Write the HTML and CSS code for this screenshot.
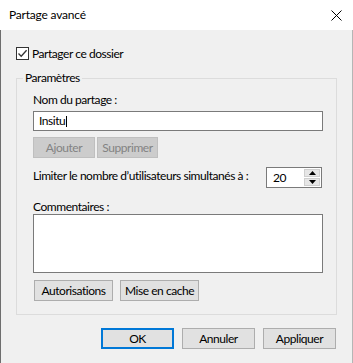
FILE: index.html
```html
<!DOCTYPE html>
<html lang="fr">
<head>
<meta charset="utf-8">
<title>Partage avancé</title>
<link rel="stylesheet" href="styles.css">
</head>
<body>
<div class="window">
  <div class="titlebar">
    <span class="title">Partage avancé</span>
    <svg class="close" width="11" height="11" viewBox="0 0 11 11"><path d="M0.5 0.5 L10.5 10.5 M10.5 0.5 L0.5 10.5" stroke="#000" stroke-width="1" fill="none"/></svg>
  </div>
  <div class="content">
    <div class="check">
      <span class="box"><svg width="11" height="11" viewBox="0 0 11 11"><path d="M1.5 5.5 L4.2 8.3 L9.6 2.2" stroke="#333" stroke-width="1.3" fill="none"/></svg></span>
      <span class="checklabel">Partager ce dossier</span>
    </div>
    <fieldset class="group">
      <legend class="legend">Paramètres</legend>
      <div class="groupbody">
        <div class="label">Nom du partage :</div>
        <div class="textbox">Insitu<span class="caret"></span></div>
        <div class="btnrow first">
          <div class="btn disabled w-ajouter">Ajouter</div>
          <div class="btn disabled w-supprimer">Supprimer</div>
        </div>
        <div class="limit">
          <span class="limittext">Limiter le nombre d’utilisateurs simultanés à :</span>
          <div class="spin">
            <span class="spinval">20</span>
            <div class="arrows">
              <div class="arrow"><svg width="7" height="4" viewBox="0 0 7 4"><path d="M3.5 0 L7 4 L0 4 Z" fill="#000"/></svg></div>
              <div class="arrow"><svg width="7" height="4" viewBox="0 0 7 4"><path d="M0 0 L7 0 L3.5 4 Z" fill="#000"/></svg></div>
            </div>
          </div>
        </div>
        <div class="label comments">Commentaires :</div>
        <div class="textarea"></div>
        <div class="btnrow second">
          <div class="btn w-autor">Autorisations</div>
          <div class="btn w-cache">Mise en cache</div>
        </div>
      </div>
    </fieldset>
    <div class="footer">
      <div class="btn default w-foot">OK</div>
      <div class="btn w-foot">Annuler</div>
      <div class="btn w-foot">Appliquer</div>
    </div>
  </div>
</div>
</body>
</html>
```
FILE: styles.css
```css
html, body {
  margin: 0;
  padding: 0;
}
body {
  width: 353px;
  height: 363px;
  overflow: hidden;
  background: #f0f0f0;
  font-family: "Segoe UI", Lato, "Noto Sans", sans-serif;
  font-size: 12px;
  letter-spacing: -0.45px;
  color: #000;
  white-space: nowrap;
}
.window {
  width: 353px;
  height: 363px;
  box-sizing: border-box;
  display: flex;
  flex-direction: column;
}
.titlebar {
  height: 30px;
  background: #fff;
  display: flex;
  align-items: center;
  justify-content: space-between;
  padding: 0 11px 0 9px;
  flex-shrink: 0;
}
.title {
  line-height: 14px;
  letter-spacing: -0.2px;
}
.close {
  display: block;
  margin-top: 1px;
}
.content {
  flex: 1;
  border-left: 1px solid #6e6e6e;
  border-right: 1px solid #b5b5b5;
  padding: 17px 16px 0 15px;
}
.check {
  display: flex;
  align-items: center;
  height: 13px;
}
.box {
  width: 11px;
  height: 11px;
  border: 1px solid #333;
  background: #fff;
  display: block;
}
.box svg {
  display: block;
}
.checklabel {
  margin-left: 3px;
  line-height: 14px;
}
.group {
  margin: 11px 0 0 0;
  padding: 0;
  border: 1px solid #dcdcdc;
  width: 321px;
  min-width: 0;
  box-sizing: border-box;
  height: 244px;
}
.legend {
  margin-left: 6px;
  padding: 0 2px;
  line-height: 14px;
}
.groupbody {
  padding: 8px 13px 0 16px;
}
.label {
  line-height: 14px;
}
.textbox {
  margin-top: 4px;
  height: 20px;
  box-sizing: border-box;
  border: 1px solid #7a7a7a;
  background: #fff;
  padding-left: 5px;
  display: flex;
  align-items: center;
  line-height: 14px;
}
.caret {
  display: inline-block;
  width: 1px;
  height: 11px;
  background: #000;
  margin-left: 1px;
}
.btnrow {
  display: flex;
  gap: 2px;
}
.btnrow.first {
  margin-top: 6px;
}
.btnrow.second {
  margin-top: 7px;
  gap: 7px;
  padding-left: 1px;
}
.btn {
  height: 21px;
  box-sizing: border-box;
  border: 1px solid #adadad;
  background: #e1e1e1;
  display: flex;
  align-items: center;
  justify-content: center;
  line-height: 14px;
}
.btn.disabled {
  background: #cccccc;
  border-color: #bfbfbf;
  color: #838383;
}
.btn.default {
  border: 2px solid #0078d7;
}
.w-ajouter { width: 62px; }
.w-supprimer { width: 61px; }
.w-autor { width: 79px; }
.w-cache { width: 79px; }
.w-foot { width: 73px; }
.limit {
  margin-top: 9px;
  display: flex;
  justify-content: space-between;
  align-items: flex-start;
}
.limittext {
  line-height: 14px;
  margin-top: 2px;
}
.spin {
  width: 56px;
  height: 21px;
  box-sizing: border-box;
  border: 1px solid #7a7a7a;
  background: #fff;
  display: flex;
  justify-content: space-between;
  margin-right: 1px;
}
.spinval {
  line-height: 19px;
  padding-left: 6px;
}
.arrows {
  width: 16px;
  display: flex;
  flex-direction: column;
  padding: 1px 1px 1px 0;
  gap: 1px;
}
.arrow {
  flex: 1;
  background: #e6e6e6;
  border: 1px solid #cfcfcf;
  display: flex;
  align-items: center;
  justify-content: center;
}
.arrow svg {
  display: block;
}
.comments {
  margin-top: 12px;
}
.textarea {
  height: 59px;
  box-sizing: border-box;
  border: 1px solid #7a7a7a;
  background: #fff;
}
.footer {
  margin-top: 13px;
  display: flex;
  justify-content: flex-end;
  gap: 8px;
  padding-right: 0;
}
```
